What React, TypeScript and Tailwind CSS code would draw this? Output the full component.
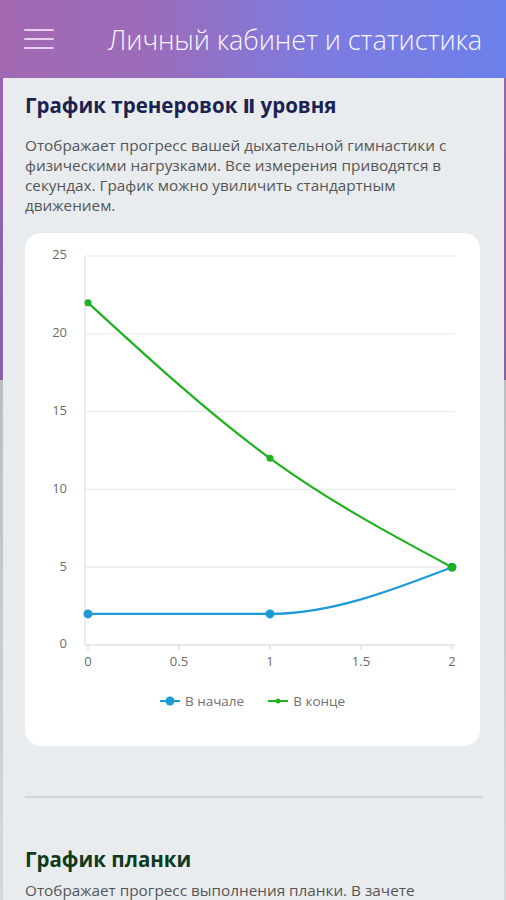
import React from 'react';

const yTicks = [0, 5, 10, 15, 20, 25];
const xTicks = [0, 0.5, 1, 1.5, 2];

const yPos = (v: number) => 412 - v * 15.56;
const xPos = (v: number) => 63 + v * 182;

const TrainingChart: React.FC = () => {
  return (
    <svg width="455" height="448" className="block">
      {/* grid */}
      {yTicks.map((v) =>
        v > 0 ? <line key={v} x1="60" x2="430" y1={yPos(v)} y2={yPos(v)} stroke="#eceef1" strokeWidth="1.5" /> : null
      )}
      <line x1="60" x2="60" y1="23" y2="412" stroke="#e3e5e8" strokeWidth="1.5" />
      <line x1="60" x2="430" y1="412" y2="412" stroke="#dfe2e5" strokeWidth="1.5" />
      {xTicks.map((v) => (
        <line key={v} x1={xPos(v)} x2={xPos(v)} y1="412" y2="417" stroke="#dfe2e5" strokeWidth="1.5" />
      ))}

      {yTicks.map((v) => (
        <text key={v} x="42" y={yPos(v)} textAnchor="end" dominantBaseline="middle" fontSize="13" fill="#6b6b6b">
          {v}
        </text>
      ))}
      {xTicks.map((v) => (
        <text key={v} x={xPos(v)} y="430" textAnchor="middle" dominantBaseline="middle" fontSize="13" fill="#6b6b6b">
          {v}
        </text>
      ))}

      {/* В начале */}
      <path
        d="M63,380.9 C123.67,380.9 184.33,380.9 245,380.9 C305.67,380.9 366.33,357.6 427,334.2"
        fill="none"
        stroke="#1b9ad6"
        strokeWidth="2.2"
      />
      <circle cx="63" cy="380.9" r="4.5" fill="#1b9ad6" />
      <circle cx="245" cy="380.9" r="4.5" fill="#1b9ad6" />
      <circle cx="427" cy="334.2" r="4.5" fill="#1b9ad6" />

      {/* В конце */}
      <path
        d="M63,69.7 C123.67,125.45 184.33,181.2 245,225.3 C305.67,269.4 366.33,301.8 427,334.2"
        fill="none"
        stroke="#1fb21f"
        strokeWidth="2.2"
      />
      <circle cx="63" cy="69.7" r="3.5" fill="#1fb21f" />
      <circle cx="245" cy="225.3" r="3.5" fill="#1fb21f" />
      <circle cx="427" cy="334.2" r="4" fill="#1fb21f" />
    </svg>
  );
};

const LegendIcon: React.FC<{ color: string; r: number }> = ({ color, r }) => (
  <svg width="20" height="12" className="block">
    <line x1="0" x2="20" y1="6" y2="6" stroke={color} strokeWidth="2" />
    <circle cx="10" cy="6" r={r} fill={color} />
  </svg>
);

export default function App() {
  return (
    <div className="min-h-[900px] h-[900px] overflow-hidden bg-[linear-gradient(to_bottom,#9b66b1_0px,#8b5fa6_380px,#bdbdbd_380px,#d8d8d8_900px)] font-['Open_Sans',sans-serif]">
      <header className="h-[78px] flex items-center bg-[linear-gradient(90deg,#a268b2_0%,#9b6cba_30%,#7d7bdf_62%,#6d80ea_100%)] pl-[24px] pr-[24px]">
        <button className="flex flex-col gap-[7px] w-[30px]">
          <span className="block h-[2px] w-[30px] bg-[#e6cff0] rounded" />
          <span className="block h-[2px] w-[30px] bg-[#e6cff0] rounded" />
          <span className="block h-[2px] w-[30px] bg-[#e6cff0] rounded" />
        </button>
        <h1 className="ml-auto text-[27px] font-light text-[#fbf6ff] leading-none tracking-[-0.1px]">
          Личный кабинет и статистика
        </h1>
      </header>

      <main className="ml-[3px] mr-[2px] bg-[#e9ecef] px-[22px] pt-[14px] h-[822px]">
        <h2 className="text-[20.5px] font-bold leading-[26px] text-[#1b2250]">
          График тренеровок <span className="font-['DejaVu_Sans',sans-serif] text-[19px]">Ⅱ</span> уровня
        </h2>
        <p className="mt-[16px] w-[458px] text-[15.3px] leading-[20px] text-[#555]">
          Отображает прогресс вашей дыхательной гимнастики с физическими нагрузками. Все измерения приводятся в
          секундах. График можно увиличить стандартным движением.
        </p>

        <div className="mt-[18px] w-[455px] bg-white rounded-[16px] pb-[37px]">
          <TrainingChart />
          <div className="mt-[12px] flex justify-center items-center gap-[24px] text-[13.5px] leading-[16px] text-[#707070]">
            <div className="flex items-center gap-[5px]">
              <LegendIcon color="#1b9ad6" r={4.5} />
              <span>В начале</span>
            </div>
            <div className="flex items-center gap-[5px]">
              <LegendIcon color="#1fb21f" r={2.5} />
              <span>В конце</span>
            </div>
          </div>
        </div>

        <div className="mt-[50px] h-[2px] w-[458px] bg-[#d3d6d9]" />

        <h2 className="mt-[48px] text-[20.5px] font-bold leading-[26px] text-[#0f3a1c]">График планки</h2>
        <p className="mt-[8px] w-[458px] text-[15.3px] leading-[20px] text-[#555]">
          Отображает прогресс выполнения планки. В зачете учитывается максимальное время удержания позиции.
        </p>
      </main>
    </div>
  );
}
